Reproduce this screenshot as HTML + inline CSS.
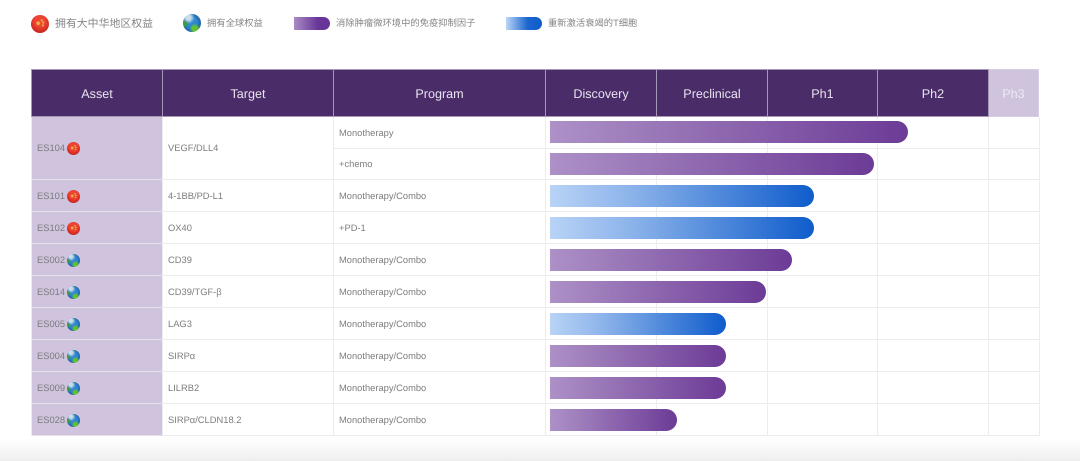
<!DOCTYPE html>
<html><head><meta charset="utf-8"><style>
html,body{margin:0;padding:0;background:#fff}
#p{position:relative;width:1080px;height:461px;overflow:hidden;background:#fff;font-family:"Liberation Sans","Noto Sans CJK SC",sans-serif;color:#7d7d7d;text-rendering:geometricPrecision;filter:blur(.3px)}
#p div{position:absolute;box-sizing:border-box}
.btm{left:0;top:437px;width:1080px;height:24px;background:linear-gradient(#fff,#fbfbfb 30%,#eeeeee)}
.tx{white-space:nowrap;line-height:14px;font-size:9.35px}
.h{top:69px;height:48px;background:#4a2c69;border:1px solid #a898b8;border-left:0;color:#e9e4ef;font-size:12.6px;line-height:48px;text-align:center}
.as{left:32px;width:130px;background:#cfc3dd;border-bottom:1px solid #e6e0ec}
.v{width:1px;top:117px;height:319px;background:#ececec}
.hl{left:163px;width:877px;height:1px;background:#ececec}
.b{height:22px;left:550px;border-radius:0 11px 11px 0}
.pu{background:linear-gradient(90deg,#ae90c8,#a384bf 15%,#6c3b96)}
.bl{background:linear-gradient(90deg,#b8d3f6,#8db4ea 30%,#0f5ccc)}
.cn{width:16px;height:16px;border-radius:50%;background:radial-gradient(circle at 40% 46%,#eeb040 0 9%,transparent 17%),radial-gradient(circle at 60% 30%,#eeb040 0 4%,transparent 9%),radial-gradient(circle at 68% 42%,#eeb040 0 4%,transparent 9%),radial-gradient(circle at 66% 58%,#eeb040 0 4%,transparent 9%),radial-gradient(circle at 50% 35%,#ee4434 35%,#d22a22 68%,#a81f1c)}
.gl{width:16px;height:16px;border-radius:50%;background:radial-gradient(circle at 66% 82%,#62c232 0 14%,transparent 28%),radial-gradient(circle at 10% 55%,#3f9c3a 0 8%,transparent 20%),radial-gradient(circle at 30% 20%,#c9dfe8 0 12%,transparent 34%),radial-gradient(circle at 48% 48%,#2f86d2 40%,#1b5f9e 72%,#173f5e)}
.sm{width:13px;height:13px}
</style></head><body><div id="p">
<div class="btm"></div>

<div class="cn" style="left:31px;top:15px;width:18px;height:18px"></div>
<div class="tx" style="left:55px;top:16.5px;font-size:10.9px;color:#868686">拥有大中华地区权益</div>
<div class="gl" style="left:183px;top:14px;width:18px;height:18px"></div>
<div class="tx" style="left:207px;top:16px;font-size:9.3px;color:#868686">拥有全球权益</div>
<div class="pu" style="left:294px;top:16.5px;width:36px;height:13px;border-radius:0 6.5px 6.5px 0;background:linear-gradient(90deg,#a98cc4,#6a3798 65%,#65339a)"></div>
<div class="tx" style="left:336px;top:16px;font-size:9.3px;color:#868686">消除肿瘤微环境中的免疫抑制因子</div>
<div class="bl" style="left:506px;top:16.5px;width:36px;height:13px;border-radius:0 6.5px 6.5px 0;background:linear-gradient(90deg,#bcd6f6,#1b66cf 60%,#0d5ccb)"></div>
<div class="tx" style="left:548px;top:16px;font-size:9.3px;color:#868686">重新激活衰竭的T细胞</div>

<div class="h" style="left:31px;width:132px;border-left:1px solid #a898b8">Asset</div>
<div class="h" style="left:163px;width:171px">Target</div>
<div class="h" style="left:334px;width:212px">Program</div>
<div class="h" style="left:546px;width:111px">Discovery</div>
<div class="h" style="left:657px;width:111px">Preclinical</div>
<div class="h" style="left:768px;width:110px">Ph1</div>
<div class="h" style="left:878px;width:111px">Ph2</div>
<div class="h" style="left:989px;width:50px;background:#cfc3dd;border-color:#d8d0e2;color:#eee9f3">Ph3</div>

<div class="as" style="left:31px;top:117px;width:1px;height:319px;background:#ececec;border:0"></div>
<div class="as" style="top:117px;height:63px"></div>
<div class="as" style="top:180px;height:32px"></div>
<div class="as" style="top:212px;height:32px"></div>
<div class="as" style="top:244px;height:32px"></div>
<div class="as" style="top:276px;height:32px"></div>
<div class="as" style="top:308px;height:32px"></div>
<div class="as" style="top:340px;height:32px"></div>
<div class="as" style="top:372px;height:32px"></div>
<div class="as" style="top:404px;height:32px"></div>

<div class="v" style="left:162px"></div>
<div class="v" style="left:333px"></div>
<div class="v" style="left:545px"></div>
<div class="v" style="left:656px"></div>
<div class="v" style="left:767px"></div>
<div class="v" style="left:877px"></div>
<div class="v" style="left:988px"></div>
<div class="v" style="left:1039px"></div>

<div class="hl" style="left:334px;width:706px;top:148px"></div>
<div class="hl" style="top:179px"></div>
<div class="hl" style="top:211px"></div>
<div class="hl" style="top:243px"></div>
<div class="hl" style="top:275px"></div>
<div class="hl" style="top:307px"></div>
<div class="hl" style="top:339px"></div>
<div class="hl" style="top:371px"></div>
<div class="hl" style="top:403px"></div>
<div class="hl" style="top:435px"></div>

<div class="tx" style="left:37px;top:141px">ES104</div><div class="cn sm" style="left:67px;top:142px"></div>
<div class="tx" style="left:37px;top:189px">ES101</div><div class="cn sm" style="left:67px;top:190px"></div>
<div class="tx" style="left:37px;top:221px">ES102</div><div class="cn sm" style="left:67px;top:222px"></div>
<div class="tx" style="left:37px;top:253px">ES002</div><div class="gl sm" style="left:67px;top:254px"></div>
<div class="tx" style="left:37px;top:285px">ES014</div><div class="gl sm" style="left:67px;top:286px"></div>
<div class="tx" style="left:37px;top:317px">ES005</div><div class="gl sm" style="left:67px;top:318px"></div>
<div class="tx" style="left:37px;top:349px">ES004</div><div class="gl sm" style="left:67px;top:350px"></div>
<div class="tx" style="left:37px;top:381px">ES009</div><div class="gl sm" style="left:67px;top:382px"></div>
<div class="tx" style="left:37px;top:413px">ES028</div><div class="gl sm" style="left:67px;top:414px"></div>

<div class="tx" style="left:168px;top:141px">VEGF/DLL4</div>
<div class="tx" style="left:168px;top:189px">4-1BB/PD-L1</div>
<div class="tx" style="left:168px;top:221px">OX40</div>
<div class="tx" style="left:168px;top:253px">CD39</div>
<div class="tx" style="left:168px;top:285px">CD39/TGF-β</div>
<div class="tx" style="left:168px;top:317px">LAG3</div>
<div class="tx" style="left:168px;top:349px">SIRPα</div>
<div class="tx" style="left:168px;top:381px">LILRB2</div>
<div class="tx" style="left:168px;top:413px">SIRPα/CLDN18.2</div>

<div class="tx" style="left:339px;top:125.5px">Monotherapy</div>
<div class="tx" style="left:339px;top:157px">+chemo</div>
<div class="tx" style="left:339px;top:189px">Monotherapy/Combo</div>
<div class="tx" style="left:339px;top:221px">+PD-1</div>
<div class="tx" style="left:339px;top:253px">Monotherapy/Combo</div>
<div class="tx" style="left:339px;top:285px">Monotherapy/Combo</div>
<div class="tx" style="left:339px;top:317px">Monotherapy/Combo</div>
<div class="tx" style="left:339px;top:349px">Monotherapy/Combo</div>
<div class="tx" style="left:339px;top:381px">Monotherapy/Combo</div>
<div class="tx" style="left:339px;top:413px">Monotherapy/Combo</div>

<div class="b pu" style="top:121px;width:358px"></div>
<div class="b pu" style="top:153px;width:324px"></div>
<div class="b bl" style="top:185px;width:264px"></div>
<div class="b bl" style="top:217px;width:264px"></div>
<div class="b pu" style="top:249px;width:242px"></div>
<div class="b pu" style="top:281px;width:216px"></div>
<div class="b bl" style="top:312.5px;width:176px"></div>
<div class="b pu" style="top:344.5px;width:176px"></div>
<div class="b pu" style="top:376.5px;width:176px"></div>
<div class="b pu" style="top:408.5px;width:127px"></div>
</div></body></html>
